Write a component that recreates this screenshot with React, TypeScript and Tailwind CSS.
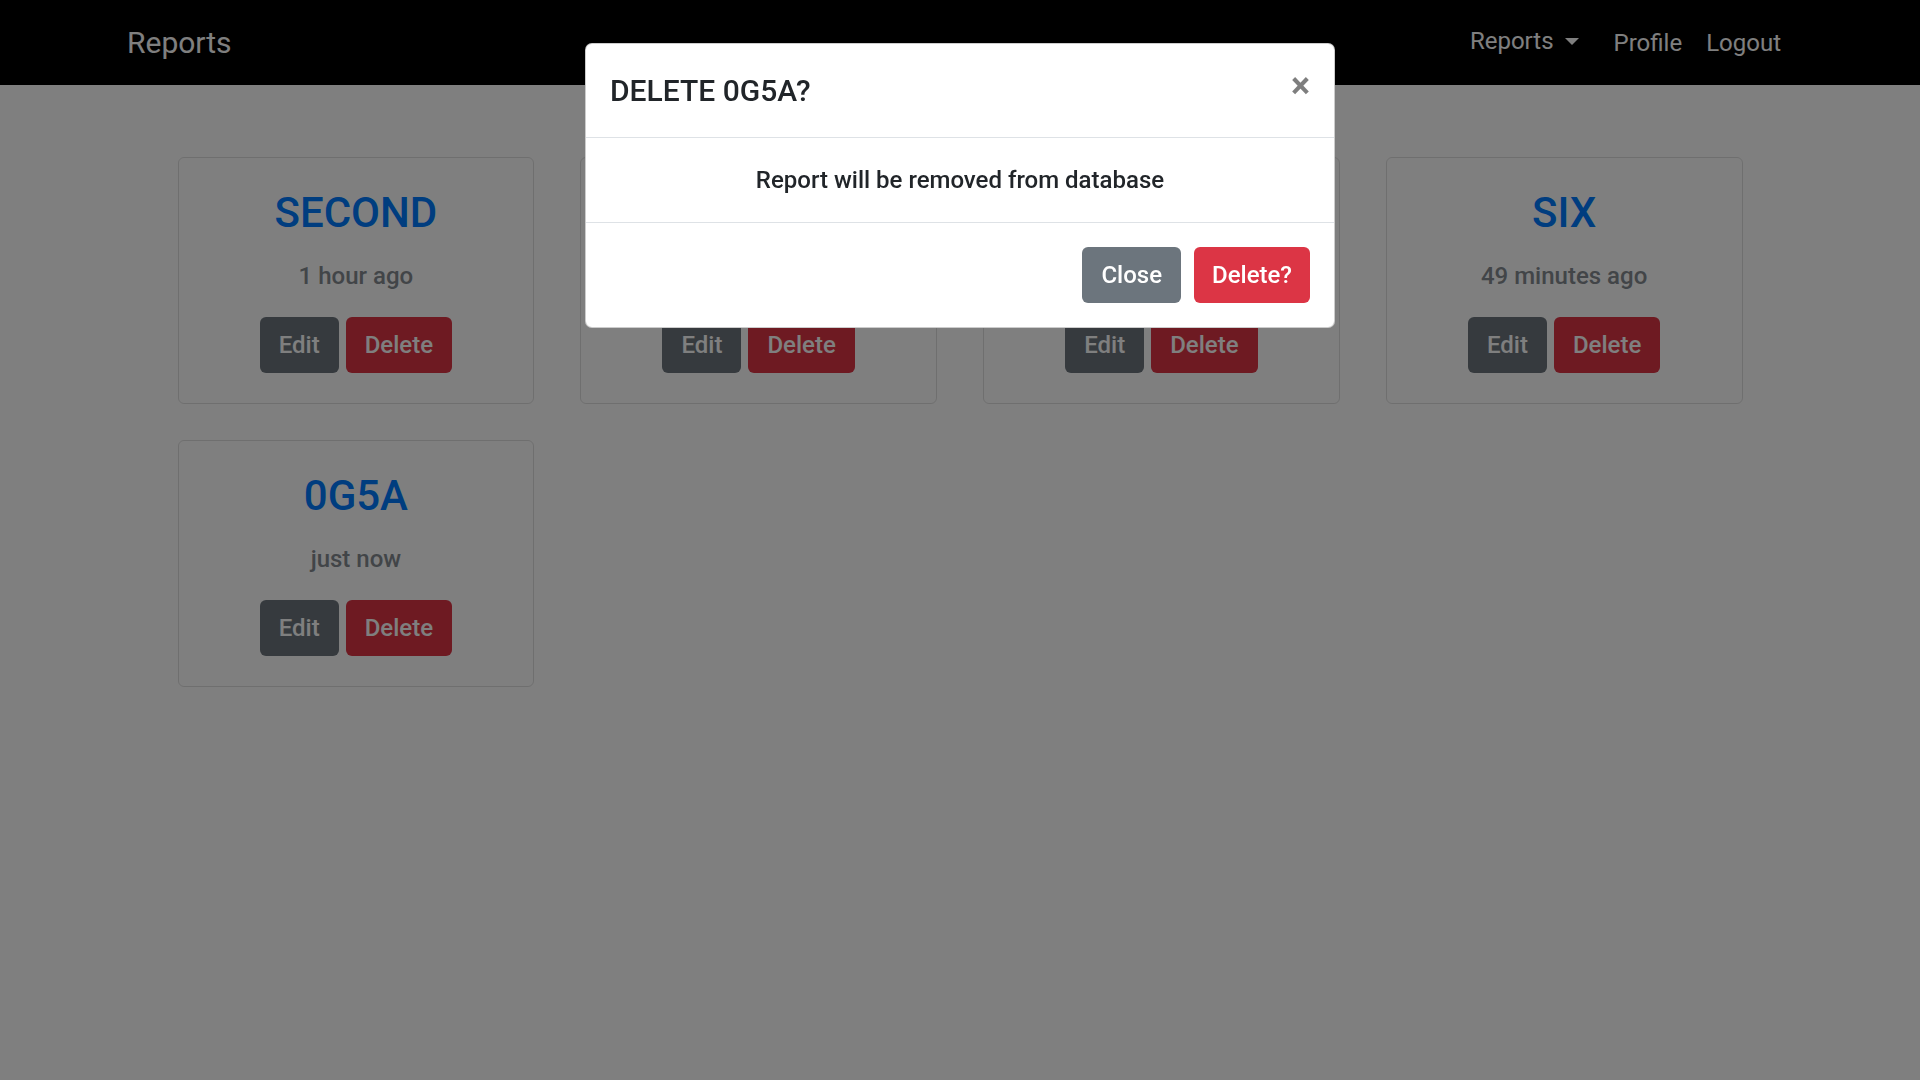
import React from 'react';

type Report = { id: string; title: string; updated: string };

const reports: Report[] = [
    { id: '1', title: 'SECOND', updated: '1 hour ago' },
    { id: '2', title: 'THIRD', updated: '58 minutes ago' },
    { id: '3', title: 'FIFTH', updated: '52 minutes ago' },
    { id: '4', title: 'SIX', updated: '49 minutes ago' },
    { id: '5', title: '0G5A', updated: 'just now' },
];

function ReportCard({ report }: { report: Report }) {
    return (
        <div className="border border-[#dfdfdf] rounded-[6px] p-[30px] text-center">
            <h3 className="text-[42px] leading-[50px] font-medium text-[#007bff]">{report.title}</h3>
            <p className="mt-[20px] text-[24px] leading-[36px] font-medium text-[#848a90]">{report.updated}</p>
            <div className="mt-[23px] flex justify-center gap-[7px]">
                <button className="h-[56px] px-[19px] rounded-[6px] bg-[#6c757d] text-white text-[24px] font-medium">
                    Edit
                </button>
                <button className="h-[56px] px-[19px] rounded-[6px] bg-[#dc3545] text-white text-[24px] font-medium">
                    Delete
                </button>
            </div>
        </div>
    );
}

export default function App() {
    const pending = reports[4];

    return (
        <div className="min-h-screen bg-white font-['Roboto','Liberation_Sans',sans-serif]">
            {/* Navbar */}
            <nav className="bg-black h-[85px]">
                <div className="w-[1710px] mx-auto px-[22px] h-full flex items-center justify-between">
                    <span className="text-white text-[30px] leading-[45px]">Reports</span>
                    <ul className="flex items-center">
                        <li className="px-[12px] pb-[4px] text-white text-[24px] leading-[36px] flex items-center">
                            Reports
                            <span className="ml-[11px] mt-[2px] inline-block w-0 h-0 border-t-[7px] border-x-[7px] border-b-0 border-t-white border-x-transparent" />
                        </li>
                        <li className="px-[12px] ml-[11px] text-white text-[24px] leading-[36px]">Profile</li>
                        <li className="px-[12px] text-white text-[24px] leading-[36px]">Logout</li>
                    </ul>
                </div>
            </nav>

            {/* Report cards */}
            <main className="w-[1565px] mx-auto mt-[72px] grid grid-cols-4 gap-x-[46px] gap-y-[36px]">
                {reports.map((r) => (
                    <ReportCard key={r.id} report={r} />
                ))}
            </main>

            {/* Backdrop */}
            <div className="fixed inset-0 bg-black/50 z-10" />

            {/* Delete modal */}
            <div className="fixed top-[43px] left-1/2 -translate-x-1/2 w-[750px] z-20 bg-white rounded-[7px] border border-black/20">
                <div className="flex items-start p-[24px] border-b border-[#dee2e6]">
                    <h5 className="text-[30px] leading-[45px] font-medium text-[#212529]">DELETE {pending.title}?</h5>
                    <button className="-m-[24px] ml-auto p-[24px] text-[36px] leading-none font-bold text-black opacity-50">
                        ×
                    </button>
                </div>
                <div className="p-[24px] text-center text-[24px] leading-[36px] font-medium text-[#212529]">
                    Report will be removed from database
                </div>
                <div className="flex justify-end items-center gap-[13px] py-[24px] px-[24px] border-t border-[#dee2e6]">
                    <button className="h-[56px] px-[19px] rounded-[6px] bg-[#6c757d] text-white text-[24px] font-medium">
                        Close
                    </button>
                    <button className="h-[56px] px-[18px] rounded-[6px] bg-[#dc3545] text-white text-[24px] font-medium">
                        Delete?
                    </button>
                </div>
            </div>
        </div>
    );
}
